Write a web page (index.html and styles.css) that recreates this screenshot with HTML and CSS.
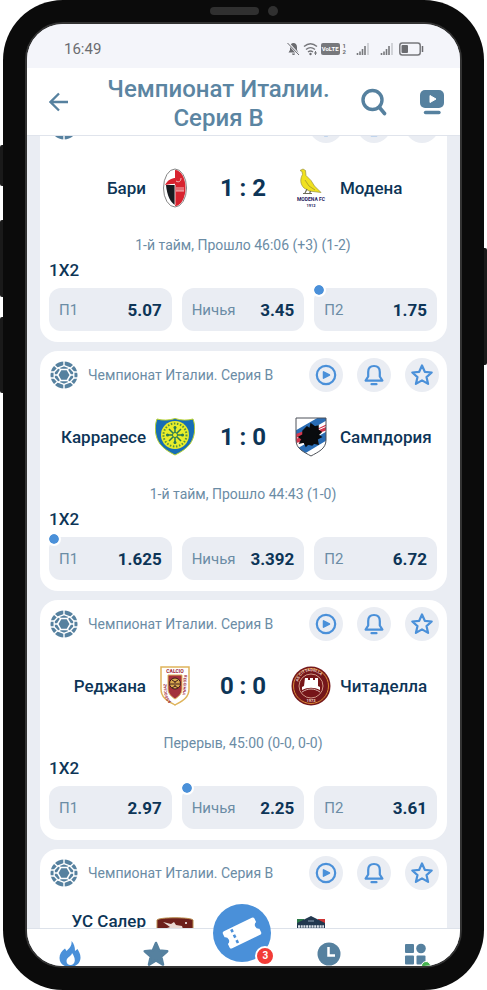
FILE: index.html
```html
<!DOCTYPE html>
<html lang="ru">
<head>
<meta charset="utf-8">
<meta name="viewport" content="width=device-width, initial-scale=1">
<title>Чемпионат Италии. Серия B</title>
<link rel="stylesheet" href="styles.css">
</head>
<body>
<svg class="sprite" aria-hidden="true">
  <defs>
    <symbol id="ball" viewBox="0 0 28 28">
      <circle cx="14" cy="14" r="13.5" fill="#56819f"/>
      <path d="M14 0v5M14 23v5M7.800 7.500 4 4M20.200 7.500 24 4M7.800 20.500 4 24M20.200 20.500 24 24M0 11h4.500M0 17h4.500M28 11h-4.500M28 17h-4.500" stroke="#fff" stroke-width="1.400"/>
      <path d="M14 4.600 19.800 6.800 23.800 11v6l-4 4.200L14 23.400 8.200 21.200 4.200 17v-6l4-4.200z" fill="#56819f" stroke="#fff" stroke-width="1.300" stroke-linejoin="round"/>
      <path d="M11 8.800 8.200 6.800M17 8.800l2.800-2M11 19.200l-2.800 2M17 19.200l2.800 2M8 14H4M20 14h4" stroke="#fff" stroke-width="1.300"/>
      <path d="M7.600 14 10.800 8.500h6.400L20.400 14l-3.200 5.500h-6.400z" fill="#56819f" stroke="#fff" stroke-width="1.500"/>
    </symbol>
    <symbol id="play" viewBox="0 0 24 24">
      <circle cx="12" cy="12" r="9.200" fill="none" stroke="#4a90d9" stroke-width="2.200"/>
      <path d="M9.500 8.800v6.400l6-3.200z" fill="#4a90d9" stroke="#4a90d9" stroke-width="1.500" stroke-linejoin="round"/>
    </symbol>
    <symbol id="bell" viewBox="0 0 24 24">
      <path d="M12 3c-3.800 0-5.800 2.600-5.800 6v4.500L3.600 17.600h16.800l-2.600-4.100V9c0-3.400-2-6-5.800-6z" fill="none" stroke="#4a90d9" stroke-width="2.200" stroke-linejoin="round"/>
      <path d="M9.500 21.200h5" stroke="#4a90d9" stroke-width="2.200" stroke-linecap="round"/>
    </symbol>
    <symbol id="star" viewBox="0 0 24 24">
      <path d="m12 2.500 2.800 6.300 6.900.7-5.200 4.600 1.600 6.800L12 17.400l-6.100 3.500 1.600-6.800-5.200-4.600 6.900-.7z" fill="none" stroke="#4a90d9" stroke-width="2.200" stroke-linejoin="round"/>
    </symbol>
    <symbol id="signal" viewBox="0 0 14 14">
      <path d="M1.500 11v2M4 9.500V13M6.500 7v6M9 4v9" stroke="#77787c" stroke-width="1.600" fill="none"/>
      <path d="M12 1v12" stroke="#c6c7cc" stroke-width="1.500"/>
    </symbol>
  </defs>
</svg>
<div class="phone">
  <i class="side side-a"></i><i class="side side-b"></i><i class="side side-c"></i><i class="side side-d"></i>
  <div class="speaker"><i class="slot"></i><i class="lens"></i></div>
  <div class="screen">
    <div class="status">
      <span class="clock">16:49</span>
      <div class="indicators">
        <svg width="13" height="14" viewBox="0 0 13 14"><path d="M6.500 1C4.300 1 3 2.700 3 5v3L1.500 10.500h10L10 8V5c0-2.300-1.300-4-3.500-4zM5 11.500h3a1.500 1.500 0 0 1-3 0z" fill="#6b6c70"/><path d="m1 1 11 12" stroke="#f4f5fa" stroke-width="2.500"/><path d="m.5 1 11.500 12" stroke="#6b6c70"/></svg>
        <svg width="15" height="14" viewBox="0 0 15 14"><path d="M1 4.500c4-3.500 9-3.500 13 0M3 7.500c3-2.500 6-2.500 9 0M5 10c1.700-1.300 3.300-1.300 5 0" fill="none" stroke="#77787c" stroke-width="1.400"/><circle cx="7.500" cy="12" r="1.200" fill="#6b6c70"/><path d="M12.500 9v4M11 11h3" stroke="#77787c"/></svg>
        <span class="volte">VoLTE</span>
        <span class="sim"><b>1</b><b>2</b></span>
        <svg class="bars" width="14" height="14"><use href="#signal"/></svg>
        <svg class="bars" width="14" height="14"><use href="#signal"/></svg>
        <svg class="battery" width="25" height="14" viewBox="0 0 25 14"><rect x=".8" y="1" width="20.400" height="12" rx="2.500" fill="none" stroke="#77787c" stroke-width="1.500"/><rect x="2.500" y="3" width="6.500" height="8" rx="1" fill="#6b6c70"/><path d="M23.500 4v6" stroke="#6b6c70" stroke-width="1.500"/></svg>
      </div>
    </div>
    <header class="topbar">
      <button class="plain" aria-label="Назад"><svg width="20" height="20" viewBox="0 0 20 20"><path d="M19 10H1.500M10 1.500 1.500 10l8.500 8.500" fill="none" stroke="#56819f" stroke-width="2.300"/></svg></button>
      <h1>Чемпионат Италии. Серия B</h1>
      <div class="tools">
        <button class="plain" aria-label="Поиск"><svg width="26" height="28" viewBox="0 0 26 28"><circle cx="11.500" cy="12" r="9.500" fill="none" stroke="#56819f" stroke-width="3.400"/><path d="m18.500 19.500 5 6" stroke="#56819f" stroke-width="3.600" stroke-linecap="round"/></svg></button>
        <button class="plain" aria-label="Трансляции"><svg width="26" height="26" viewBox="0 0 26 26"><rect x="1" y="1" width="24" height="18" rx="5" fill="#56819f"/><path d="M11 6.500v7l6-3.500z" fill="#fff" stroke="#fff" stroke-linejoin="round"/><path d="M6.500 23.500h13.500" stroke="#56819f" stroke-width="3.400" stroke-linecap="round"/></svg></button>
      </div>
    </header>
    <main class="feed">
      <article class="card">
        <div class="card-head">
          <svg width="28" height="28"><use href="#ball"/></svg><span class="league"></span>
          <button class="round" aria-label="Смотреть"><svg width="24" height="24"><use href="#play"/></svg></button>
          <button class="round" aria-label="Уведомления"><svg width="24" height="24"><use href="#bell"/></svg></button>
          <button class="round" aria-label="В избранное"><svg width="24" height="24"><use href="#star"/></svg></button>
        </div>
        <div class="teams">
          <span class="team home">Бари</span>
          <svg class="crest" viewBox="0 0 40 40"><ellipse cx="20" cy="20" rx="11.500" ry="19" fill="#fff" stroke="#777" stroke-width=".9"/><path d="M20 2c6 0 10.500 8 10.500 18S26 38 20 38z" fill="#d8232f"/><path d="M11 17h9v20c-4-2-8-9-9-20z" fill="#171b20"/><path d="M10 17c3-5 6-7 11-7 2-4 6-4 6 0 0 5-6 6-11 6z" fill="#d8232f"/><path d="M21 13c3 2 5 0 5-3M22 23v-4M24 23v-4M26 23v-4M28 23v-4M21 23h8" fill="none" stroke="#f3b9bb"/><path d="M20 17v20" stroke="#fff" stroke-width=".8"/></svg>
          <strong class="score">1 : 2</strong>
          <svg class="crest" viewBox="0 0 40 40"><path d="M9 2.500 12 1l2.500 1.500.5 5 5 5 3.500 5.500 6.500 6.500-8-1-4-.5-5-3c-4-4-4-9-1.500-13.500l-.5-3z" fill="#f0e11f" stroke="#9b9340" stroke-width=".7"/><path d="m14 12 4 6 6 4" fill="none" stroke="#b3a62a"/><path d="M16 21l-2 4M19.500 23l-1 3M12 25.500h9" fill="none" stroke="#6d6c58" stroke-width="1.200"/><text x="20" y="33" class="crest-name">MODENA FC</text><text x="20" y="39" class="crest-year">1912</text></svg>
          <span class="team">Модена</span>
        </div>
        <p class="period">1-й тайм, Прошло 46:06 (+3) (1-2)</p>
        <h2>1X2</h2>
        <div class="odds">
          <button class="odd"><span>П1</span><b>5.07</b></button>
          <button class="odd"><span>Ничья</span><b>3.45</b></button>
          <button class="odd marked"><span>П2</span><b>1.75</b></button>
        </div>
      </article>
      <article class="card">
        <div class="card-head">
          <svg width="28" height="28"><use href="#ball"/></svg><span class="league">Чемпионат Италии. Серия B</span>
          <button class="round" aria-label="Смотреть"><svg width="24" height="24"><use href="#play"/></svg></button>
          <button class="round" aria-label="Уведомления"><svg width="24" height="24"><use href="#bell"/></svg></button>
          <button class="round" aria-label="В избранное"><svg width="24" height="24"><use href="#star"/></svg></button>
        </div>
        <div class="teams">
          <span class="team home">Карраресе</span>
          <svg class="crest" viewBox="0 0 40 40"><path d="M2 2c5 1.500 12 1.500 18-.5 6 2 13 2 18 .5 3 8 2 18-3 25-4 5-9 8-15 11-6-3-11-6-15-11C0 20-1 10 2 2z" fill="#176db5" stroke="#b9d232"/><circle cx="20" cy="18" r="14" fill="#e9ed2a"/><circle cx="20" cy="18" r="11.500" fill="none" stroke="#57923f" stroke-width="2" stroke-dasharray="1.500 1.600"/><path d="M20 9.500v17M11.500 18h17M14 12l12 12M26 12l-12 12" stroke="#287a55" stroke-width="1.500"/><circle cx="20" cy="18" r="2.500" fill="#e9ed2a" stroke="#287a55"/><g fill="#287a55"><circle cx="20" cy="10.500" r="1.500"/><circle cx="20" cy="25.500" r="1.500"/><circle cx="12.500" cy="18" r="1.500"/><circle cx="27.500" cy="18" r="1.500"/></g></svg>
          <strong class="score">1 : 0</strong>
          <svg class="crest" viewBox="0 0 40 40"><defs><clipPath id="samp"><path d="M5 1h30v22c0 9-8 12-15 16C13 35 5 32 5 23z"/></clipPath></defs><g clip-path="url(#samp)"><path d="M4 0h32v40H4z" fill="#fff"/><path d="M0 16 28 0h10v2L0 24zM2 34 38 13v9L8 40z" fill="#2a6db5"/><path d="m5 17 8-3v10l-8 2zM26 12l10-5v6l-8 3z" fill="#d4374d"/><path d="m6 21 7-3M27 13l9-4" stroke="#fff"/></g><path d="m12 14 4-4 3 2 1-5 4 3 3-1v4l3 2-3 3 3 2-4 2 1 5-4-1-2 2-4-1-2 2-2-4-4 1 2-4-3-2 4-2z" fill="#090b0e" stroke="#090b0e" stroke-width="1.500"/><path d="M5 1h30v22c0 9-8 12-15 16C13 35 5 32 5 23z" fill="none" stroke="#4c5158"/></svg>
          <span class="team">Сампдория</span>
        </div>
        <p class="period">1-й тайм, Прошло 44:43 (1-0)</p>
        <h2>1X2</h2>
        <div class="odds">
          <button class="odd marked"><span>П1</span><b>1.625</b></button>
          <button class="odd"><span>Ничья</span><b>3.392</b></button>
          <button class="odd"><span>П2</span><b>6.72</b></button>
        </div>
      </article>
      <article class="card">
        <div class="card-head">
          <svg width="28" height="28"><use href="#ball"/></svg><span class="league">Чемпионат Италии. Серия B</span>
          <button class="round" aria-label="Смотреть"><svg width="24" height="24"><use href="#play"/></svg></button>
          <button class="round" aria-label="Уведомления"><svg width="24" height="24"><use href="#bell"/></svg></button>
          <button class="round" aria-label="В избранное"><svg width="24" height="24"><use href="#star"/></svg></button>
        </div>
        <div class="teams">
          <span class="team home">Реджана</span>
          <svg class="crest" viewBox="0 0 40 40"><path d="M6 1h28v22c0 9-7 12-14 16C13 35 6 32 6 23z" fill="#fff" stroke="#dfb45b" stroke-width="1.500"/><path d="M13 9h14v14c0 5-4 8-7 10-3-2-7-5-7-10z" fill="#a3303c" stroke="#dfb45b"/><circle cx="20" cy="17.500" r="5.500" fill="#d9a84e" stroke="#3d1c1c"/><path d="m17 14 3 2 3-2M20 16v4l-3 2M20 20l3 2M15 18h4M21 18h4" fill="none" stroke="#3d1c1c"/><text x="20" y="7" class="crest-calcio">CALCIO</text><path id="reg-l" d="M18 37C11 32 11.500 27 11.500 9" fill="none"/><path id="reg-r" d="M28.500 9c0 18 0 22-7 28" fill="none"/><text class="crest-ring"><textPath href="#reg-l" startOffset="2">ASSOCIAZ</textPath></text><text class="crest-ring"><textPath href="#reg-r">REGGIANA</textPath></text></svg>
          <strong class="score">0 : 0</strong>
          <svg class="crest" viewBox="0 0 40 40"><circle cx="20" cy="20" r="19.500" fill="#74171b"/><circle cx="20" cy="20" r="17.500" fill="none" stroke="#dc8b35"/><circle cx="20" cy="20" r="12" fill="#761518" stroke="#e5b8a1" stroke-width=".8"/><path d="M14 12h3v2h2v-2h3v2h2v-2h3v8l2 1v3c-6-3-12-3-18 0v-3l2-1z" fill="#fff"/><path d="M11 26c6-4 12-4 18 0" fill="none" stroke="#d9b3ad"/><path id="cit" d="M7 18c1-17 25-17 26 0" fill="none"/><text class="crest-cit"><textPath href="#cit" startOffset="2">AS CITTADELLA</textPath></text><text x="20" y="36" class="crest-cit mid">1973</text></svg>
          <span class="team">Читаделла</span>
        </div>
        <p class="period">Перерыв, 45:00 (0-0, 0-0)</p>
        <h2>1X2</h2>
        <div class="odds">
          <button class="odd"><span>П1</span><b>2.97</b></button>
          <button class="odd marked"><span>Ничья</span><b>2.25</b></button>
          <button class="odd"><span>П2</span><b>3.61</b></button>
        </div>
      </article>
      <article class="card">
        <div class="card-head">
          <svg width="28" height="28"><use href="#ball"/></svg><span class="league">Чемпионат Италии. Серия B</span>
          <button class="round" aria-label="Смотреть"><svg width="24" height="24"><use href="#play"/></svg></button>
          <button class="round" aria-label="Уведомления"><svg width="24" height="24"><use href="#bell"/></svg></button>
          <button class="round" aria-label="В избранное"><svg width="24" height="24"><use href="#star"/></svg></button>
        </div>
        <div class="teams">
          <span class="team home two">УС Салер</span>
          <svg class="crest" viewBox="0 0 40 40"><path d="M2 5c2-3 34-3 36 0v18c0 9-9 13-18 17C11 36 2 32 2 23z" fill="#6d1f1b" stroke="#b98e50"/><path d="m8 7 8 2 3-2 2 3 6 1 1 3H9l6-2z" fill="#e9d8d2"/><circle cx="31" cy="8" r="1" fill="#fff"/></svg>
          <strong class="score"></strong>
          <svg class="crest" viewBox="0 0 40 40"><path d="M6 4h7v8H6z" fill="#2c7a4a"/><path d="M27 4h7v8h-7z" fill="#cf3434"/><path d="M6 8 20 1l14 7v16c0 8-8 11-14 15C14 35 6 32 6 24z" fill="#22384f"/><path d="M7 11.500h26" stroke="#dfe5ec" stroke-width="2.500" stroke-dasharray="2 .7"/><path d="M17 6h6" stroke="#8ea1b5"/></svg>
          <span class="team"></span>
        </div>
      </article>
    </main>
    <nav class="tabs">
      <a href="#" aria-label="Популярное"><svg width="24" height="28" viewBox="0 0 24 28"><path d="M13.500 1c.5 4-1 6-3.500 8.500L8.500 11 7 8.500C3.500 11 1.500 14 1.500 18c0 5.500 4.500 9 10.500 9s10.500-4 10.500-9.500c0-3.500-1.500-6-3-8.500l-2.500 2c0-4-1-7.500-3.500-10z" fill="#4a90d9"/><path d="M14 13c0 3-5.500 4-5.500 8 0 2.500 1.700 4 4 4s4.300-1.800 4.300-4.500c0-3-1.300-5.500-2.800-7.500z" fill="#fff"/></svg></a>
      <a href="#" aria-label="Избранное"><svg width="28" height="28" viewBox="0 0 28 28"><path d="m14 3 3.200 7.400 8 .8-6 5.400 1.800 8L14 20.500l-7 4.100 1.800-8-6-5.400 8-.8z" fill="#56819f" stroke="#56819f" stroke-width="2.500" stroke-linejoin="round"/></svg></a>
      <a href="#" class="coupon" aria-label="Купон"><svg width="42" height="38" viewBox="0 0 42 38"><g transform="rotate(-26 21 19)"><path d="M5.500 9.500h31a2 2 0 0 1 2 2v3.700a4 4 0 0 0 0 7.600v3.700a2 2 0 0 1-2 2h-31a2 2 0 0 1-2-2v-3.700a4 4 0 0 0 0-7.600v-3.700a2 2 0 0 1 2-2z" fill="#fff"/><path d="M13 11v17" stroke="#4a90d9" stroke-width="2.600" stroke-dasharray="3.200 2.800"/></g></svg><span class="badge">3</span></a>
      <a href="#" aria-label="История"><svg width="24" height="24" viewBox="0 0 24 24"><circle cx="12" cy="12" r="11.500" fill="#56819f"/><path d="M11.500 5v8.500H18" fill="none" stroke="#fff" stroke-width="2.500"/></svg></a>
      <a href="#" class="menu" aria-label="Меню"><svg width="22" height="22" viewBox="0 0 22 22"><g fill="#56819f"><rect x="1" y="1" width="9" height="9" rx="1"/><circle cx="17" cy="5.500" r="4.800"/><rect x="1" y="12.500" width="9" height="9" rx="1"/><rect x="12.500" y="12.500" width="9" height="9" rx="1"/></g></svg><i class="online"></i></a>
    </nav>
  </div>
</div>
</body>
</html>
```

FILE: styles.css
```css
*, *::before { box-sizing: border-box; }
body { margin: 0; background: #fff; font-family: Roboto, "Liberation Sans", sans-serif; color: #0d3557; }
button { font: inherit; color: inherit; border: 0; padding: 0; background: none; }
svg { display: block; flex: none; }
h1, h2, p { margin: 0; }
.sprite { position: absolute; width: 0; height: 0; }

.phone { position: relative; display: flex; flex-direction: column; height: 100vh; margin: 0 3px; padding: 0 22px 22px; background: #0b0b0b; border-radius: 60px; }
.speaker { display: flex; align-items: center; justify-content: center; gap: 9px; height: 22px; }
.slot { width: 49px; height: 8px; border-radius: 4px; background: #303030; }
.lens { width: 10px; height: 10px; border-radius: 50%; background: #303030; }
.side { position: absolute; left: -3px; width: 3px; border-radius: 2px 0 0 2px; background: #1a1a1a; }
.side-a { top: 145px; height: 41px; }
.side-b { top: 220px; height: 77px; }
.side-c { top: 317px; height: 76px; }
.side-d { top: 248px; height: 117px; left: auto; right: -3px; border-radius: 0 2px 2px 0; }
.screen { flex: 1; min-height: 0; display: flex; flex-direction: column; overflow: hidden; border: 2px solid #333; border-radius: 38px; background: #eaedf3; }

.status { flex: none; display: flex; align-items: center; justify-content: space-between; height: 44px; padding: 6px 36px 0 37px; background: #f4f5fa; color: #6b6c70; }
.clock { font-size: 15px; }
.indicators { display: flex; align-items: center; gap: 3px; }
.volte { padding: 0 1px; border-radius: 2px; background: #77787c; color: #fff; font: bold 6px/12px Roboto, sans-serif; }
.sim b { display: block; font-size: 6px; line-height: 6px; }
.bars { margin-left: 7px; }
.battery { margin-left: 2px; }

.topbar { flex: none; display: flex; align-items: center; justify-content: space-between; height: 68px; padding: 0 15px 0 22px; border-bottom: 1px solid #e0e4ec; background: #fff; }
.topbar h1 { flex: 1; font-size: 24px; line-height: 29px; font-weight: 500; text-align: center; color: #5b85a2; padding: 4px 20px 0 27px; }
.tools { display: flex; align-items: center; gap: 32px; }

.feed { flex: 1; min-height: 0; overflow: hidden; display: flex; flex-direction: column; gap: 9px; padding: 0 13px; }
.card { flex: none; height: 240px; padding: 7px 10px 10px 9px; border-radius: 18px; background: #fff; }
.card:first-child { margin-top: -34px; }
.card-head { display: flex; align-items: center; height: 34px; margin-right: -2px; padding-left: 1px; }
.league { flex: 1; padding-left: 10px; font-size: 14px; color: #6b8ca5; }
.round { display: grid; place-items: center; width: 34px; height: 34px; margin-left: 14px; border-radius: 50%; background: #eaedf3; }
.teams { display: grid; grid-template-columns: minmax(0, 1fr) 40px 96px 40px minmax(0, 1fr); align-items: center; height: 90px; }
.team { padding-left: 9px; font-size: 17px; font-weight: 500; }
.home { padding: 0 9px 0 0; text-align: right; }
.two { padding-bottom: 28px; }
.crest { width: 40px; height: 40px; }
.score { font-size: 24px; font-weight: 700; text-align: center; }
.period { font-size: 14px; line-height: 24px; text-align: center; color: #6b8ca5; }
.card h2 { font-size: 17px; line-height: 20px; font-weight: 500; margin: 3px 0 8px; }
.odds { display: grid; grid-template-columns: repeat(3, 1fr); gap: 10px; }
.odd { position: relative; display: flex; align-items: center; justify-content: space-between; height: 43px; padding: 0 10px; border-radius: 12px; background: #eaedf3; font-size: 15px; color: #6b8ca5; }
.odd b { font-size: 17px; font-weight: 700; color: #0d3557; }
.marked::before { content: ""; position: absolute; left: -2px; top: -5px; width: 14px; height: 14px; border: 2px solid #fff; border-radius: 50%; background: #4a90d9; background-clip: padding-box; }

.tabs { flex: none; display: grid; grid-template-columns: repeat(5, 1fr); justify-items: center; height: 38px; padding: 10px 2px 0 0; border-top: 1px solid #dde2ea; background: #fff; position: relative; }
.tabs a { position: relative; display: grid; place-items: center; width: 30px; height: 30px; }
.tabs .coupon { width: 58px; height: 58px; margin-top: -35px; border-radius: 50%; background: #4a90d9; }
.badge { position: absolute; right: -4px; bottom: -4px; width: 20px; height: 20px; border: 2px solid #fff; border-radius: 50%; background: #f23c37; color: #fff; font-size: 10px; line-height: 16px; font-weight: 700; text-align: center; }
.online { position: absolute; right: -1px; bottom: -2px; width: 10px; height: 10px; border: 1px solid #fff; border-radius: 50%; background: #45b34f; }
.crest-name { font: bold 5px Roboto, sans-serif; text-anchor: middle; fill: #27235f; }
.crest-year { font: bold 4px Roboto, sans-serif; text-anchor: middle; fill: #27235f; }
.crest-calcio { font: bold 5px Roboto, sans-serif; text-anchor: middle; fill: #9c2638; }
.crest-ring { font: bold 4px Roboto, sans-serif; fill: #9c2638; }
.crest-cit { font: bold 4px Roboto, sans-serif; fill: #f0d6c8; }
.mid { text-anchor: middle; }
```
